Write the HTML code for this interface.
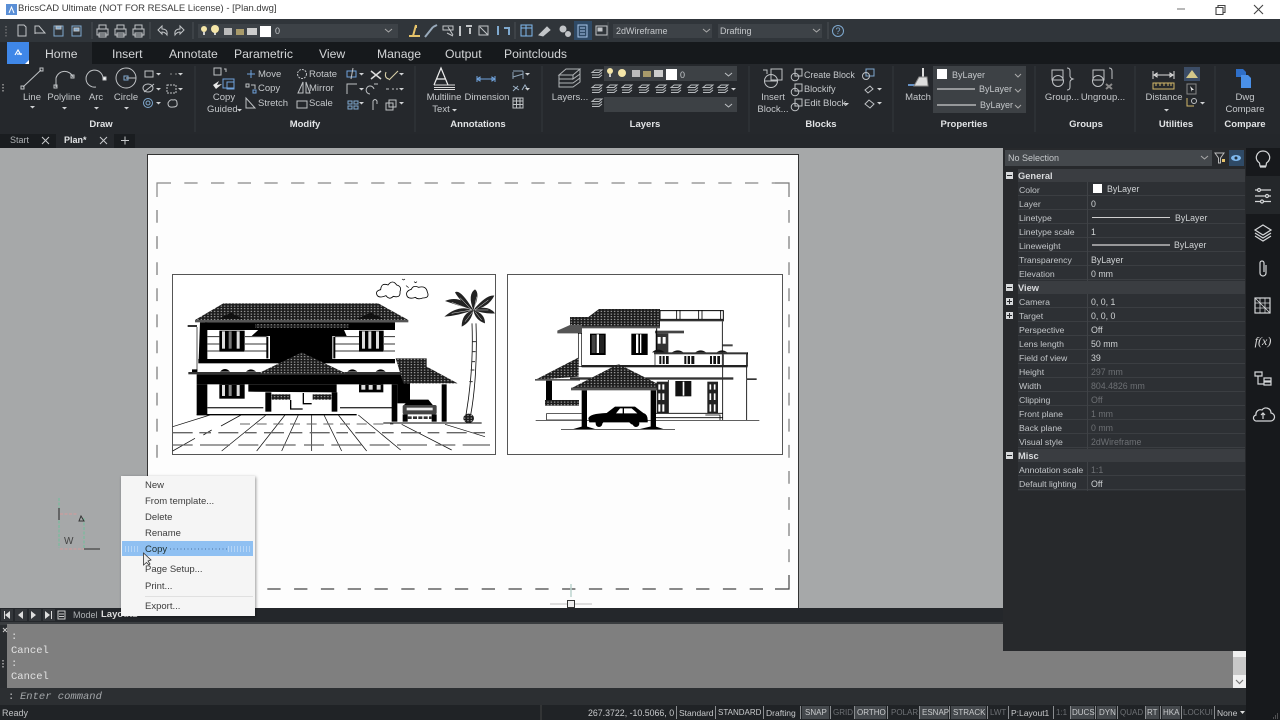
<!DOCTYPE html>
<html><head><meta charset="utf-8"><title>BricsCAD</title>
<style>
html,body{margin:0;padding:0;width:1280px;height:720px;overflow:hidden;background:#a6a8a9;font-family:"Liberation Sans",sans-serif}
.b{position:absolute}
.t,.c{position:absolute;white-space:nowrap;line-height:14px;font-size:9.5px;color:#c5c8cb}
.c{transform:translateX(-50%)}
.g{font-weight:bold;color:#e2e4e6;font-size:9.5px}
.tab{font-size:12.2px;color:#d4d6d8;top:47px}
.p{font-size:8.7px;color:#c3c6c9;left:1019px}
.v{font-size:8.8px;color:#cfd2d4;left:1091px}
.h{font-size:9.3px;font-weight:bold;color:#d8dadc;left:1018px}
.s{font-size:8.8px;top:706px;color:#c8cacc}
.u{font-size:8px}
.d{color:#6d7074}
.m{font-size:9.5px;color:#3c3c3c;left:145px}
.o{font-family:"Liberation Mono",monospace;font-size:10.5px;color:#e2e2e2;left:11px}
svg{position:absolute;left:0;top:0}
</style></head><body>
<!-- bars -->
<div class="b" style="left:0;top:0;width:1280px;height:20px;background:#fff"></div>
<div class="b" style="left:0;top:19px;width:1280px;height:23px;background:#30353a"></div>
<div class="b" style="left:0;top:42px;width:1280px;height:22px;background:#16191c"></div>
<div class="b" style="left:0;top:64px;width:1280px;height:70px;background:#25282c"></div>
<div class="b" style="left:0;top:134px;width:1280px;height:14px;background:#24272b"></div>
<div class="b" style="left:0;top:134px;width:135px;height:14px;background:#1a1d20"></div>
<div class="b" style="left:56px;top:134px;width:58px;height:14px;background:#25282c"></div>
<div class="b" style="left:0;top:148px;width:1003px;height:460px;background:#a6a8a9"></div>
<div class="b" style="left:0;top:42px;width:92px;height:22px;background:#25282c"></div>
<div class="b" style="left:7px;top:42px;width:22px;height:22px;background:#3f87e8"></div>
<div class="b" style="left:198px;top:24px;width:200px;height:14px;background:#3d4247"></div>
<div class="b" style="left:613px;top:24px;width:99px;height:14px;background:#3d4247"></div>
<div class="b" style="left:718px;top:24px;width:104px;height:14px;background:#3d4247"></div>
<div class="b" style="left:574px;top:21px;width:18px;height:19px;background:#2f4a66"></div>
<div class="b" style="left:604px;top:66px;width:133px;height:15px;background:#3d4145"></div>
<div class="b" style="left:604px;top:97px;width:133px;height:15px;background:#3d4145"></div>
<div class="b" style="left:933px;top:66px;width:93px;height:47px;background:#3d4145"></div>
<div class="b" style="left:1184px;top:67px;width:16px;height:14px;background:#3c4d66"></div>
<!-- page -->
<div class="b" style="left:148px;top:155px;width:650px;height:453px;background:#fdfdfd;outline:1px solid #333"></div>

<svg width="1280" height="720" viewBox="0 0 1280 720">
<defs>
<pattern id="hp" width="10" height="8" patternUnits="userSpaceOnUse"><rect width="10" height="8" fill="#1c1c1c"/><rect x="2" y="2" width="4" height="2.500" fill="#ddd"/></pattern>
<polygon id="dn" points="0,0 5,0 2.5,2.5" fill="#d0d2d4"/>
<g id="lay" fill="none" stroke="#b8bbbe"><path d="M0,3.500 L3,1 H10 L7,3.500z M0,6 H7 L10,3.500 M0,8.500 H7 L10,6"/></g>
<g id="bulb"><circle cx="3" cy="3" r="3" fill="#f5e6a8"/><rect x="2" y="6" width="2" height="3" fill="#ccc"/></g>
</defs>
<!-- page dashed -->
<g fill="none" stroke="#777" stroke-width="1.2">
<path d="M157,197 V183 H171" stroke="#888"/>
<path d="M184.300,183 H775" stroke-dasharray="13.300,13.400" stroke="#888"/>
<path d="M775,183 H789 V197" />
<path d="M789,210 V575" stroke-dasharray="12.800,13.300"/>
<path d="M157,210 V470" stroke-dasharray="12.800,13.300"/>
<path d="M789,575 V589 H775" stroke="#444"/>
<path d="M763,589 H256" stroke-dasharray="13.300,13.500" stroke="#444"/>
</g>
<rect x="172.500" y="274.500" width="323" height="180" fill="#fff" stroke="#555"/>
<rect x="507.500" y="274.500" width="275" height="180" fill="#fff" stroke="#555"/>
<path d="M571,584 V597" stroke="#bcd4cf" stroke-width="1.500"/><path d="M550,604 H592" stroke="#aaa" stroke-width=".8"/><rect x="567.500" y="600.500" width="7" height="7" fill="#eee" stroke="#333"/>

<!-- House 1 -->
<g transform="translate(160,265) scale(.33333)">
<polygon fill="url(#hp)" points="190,115 655,115 745,165 105,165"/>
<rect x="105" y="165" width="640" height="7" fill="#555"/>
<rect x="135" y="172" width="570" height="23" fill="#000"/>
<polygon points="175,162 213,143 250,162" fill="#111"/><polygon points="590,162 632,143 672,162" fill="#111"/>
<polygon points="120,172 142,172 142,285 116,285" fill="#000"/>
<rect x="83" y="180" width="28" height="6" fill="#333"/><path d="M111,186 V320" stroke="#000" stroke-width="2"/>
<path d="M275,213 L300,190 H550 L560,213 H517 V290 H330 V213z" fill="#000"/>
<rect x="285" y="178" width="280" height="10" fill="url(#hp)"/>
<path d="M142,215 H178 M142,237 H178 M142,258 H178 M255,215 H320 M255,237 H320 M255,258 H320 M525,215 H597 M525,237 H597 M525,258 H597 M672,215 H705 M672,237 H705 M672,258 H705" stroke="#333" stroke-width="3"/>
<path d="M322,215 V280 M523,215 V280" stroke="#000" stroke-width="6"/>
<rect x="178" y="197" width="76" height="63" fill="#000"/><rect x="186" y="199" width="9" height="52" fill="#ddd"/><rect x="206" y="199" width="9" height="52" fill="#777"/><rect x="230" y="199" width="9" height="52" fill="#ddd"/>
<rect x="597" y="197" width="74" height="63" fill="#000"/><rect x="606" y="199" width="9" height="52" fill="#ddd"/><rect x="625" y="199" width="9" height="52" fill="#ddd"/><rect x="648" y="199" width="9" height="52" fill="#ddd"/>
<rect x="115" y="282" width="590" height="13" fill="#000"/>
<rect x="85" y="321" width="645" height="7" fill="#333"/>
<path d="M96,321 h16 v-8 h-16z M180,320 q15,-16 30,0z M258,320 q15,-14 30,0z M562,320 q15,-14 30,0z M647,320 q15,-14 30,0z" fill="#000"/>
<rect x="110" y="328" width="630" height="30" fill="#000"/>
<polygon fill="url(#hp)" points="425,262 295,325 558,325"/>
<rect x="110" y="358" width="32" height="92" fill="#000"/>
<polygon points="265,358 530,358 530,382 265,380" fill="#000"/>
<rect x="178" y="358" width="76" height="43" fill="#000"/><rect x="186" y="360" width="9" height="33" fill="#ddd"/><rect x="206" y="360" width="9" height="33" fill="#888"/><rect x="230" y="360" width="9" height="33" fill="#ddd"/>
<rect x="597" y="358" width="73" height="24" fill="#000"/><rect x="604" y="360" width="12" height="14" fill="#ddd"/><rect x="626" y="360" width="12" height="14" fill="#ddd"/><rect x="650" y="360" width="12" height="14" fill="#ddd"/>
<rect x="316" y="382" width="18" height="58" fill="#000"/><rect x="515" y="382" width="17" height="58" fill="#000"/>
<rect x="335" y="388" width="56" height="16" fill="url(#hp)"/><rect x="458" y="388" width="56" height="16" fill="url(#hp)"/>
<path d="M430,384 V416 H455 M392,405 V432 H428" stroke="#000" stroke-width="4" fill="none"/>
<path d="M142,428 H310 M540,428 H700" stroke="#333" stroke-width="4"/>
<polygon fill="url(#hp)" points="707,280 800,280 800,305 893,355 730,355"/>
<rect x="695" y="358" width="17" height="112" fill="#000"/><rect x="712" y="355" width="38" height="60" fill="#000"/><rect x="845" y="358" width="15" height="112" fill="#000"/>
<path d="M748,404 H805 L820,422 H730z" fill="#000"/>
<rect x="728" y="420" width="102" height="28" fill="#444" rx="5"/><rect x="740" y="428" width="78" height="8" fill="#eee"/><rect x="728" y="448" width="15" height="22" fill="#000"/><rect x="815" y="448" width="15" height="22" fill="#000"/>
<path d="M743,458 H815" stroke="#333" stroke-width="8" stroke-dasharray="12,4"/>
<path d="M110,449 H590" stroke="#000" stroke-width="4"/>
<path d="M670,474 H965" stroke="#000" stroke-width="3"/>
<path d="M150,450 L38,485 M243,450 L183,483 M318,450 L185,558 M375,450 L290,558 M415,450 L365,558 M455,450 V558 M492,450 L545,558 M535,450 L620,558 M595,450 L722,555 M725,478 L875,555 M855,478 L975,515 M105,520 L38,558 M155,495 L130,510" stroke="#111" stroke-width="2.200" fill="none"/>
<path d="M38,503 H990" stroke="#666" stroke-width="4" stroke-dasharray="60,20,35,22"/>
<path d="M38,540 H990" stroke="#666" stroke-width="4" stroke-dasharray="60,22,90,25"/>
<path d="M240,477 H700" stroke="#666" stroke-width="3" stroke-dasharray="30,20"/>
<!-- clouds -->
<path d="M652,92 q-8,-14 10,-18 q2,-22 22,-14 q14,-18 26,0 q16,4 10,20 q2,20 -20,14 q-12,12 -22,-2 q-18,8 -26,0z M742,95 q-8,-16 12,-22 q6,-14 22,-6 q22,-6 26,14 q8,18 -14,18 q-14,6 -22,-2 q-16,6 -24,-2z" fill="#fff" stroke="#000" stroke-width="2.500"/>
<path d="M726,42 l5,3 l4,-3 M762,50 l5,3 l4,-3 M738,62 l8,6" stroke="#000" stroke-width="2" fill="none"/>
<!-- palm -->
<path d="M936,175 C940,280 930,380 918,450 M948,175 C952,280 945,380 932,450" stroke="#111" stroke-width="2.500" fill="none"/>
<path d="M937,230 h11 M936,260 h11 M934,290 h11 M932,315 h11 M928,350 h10" stroke="#333" stroke-width="3"/>
<ellipse cx="926" cy="460" rx="16" ry="14" fill="url(#hp)"/>
<g fill="#222"><path d="M940,135 Q900,88 855,108 Q895,122 940,135z"/><path d="M940,135 Q962,85 945,73 Q922,88 940,135z"/><path d="M940,135 Q980,88 1003,92 Q985,128 940,135z"/><path d="M940,135 Q985,118 1005,145 Q975,148 940,135z"/><path d="M940,135 Q895,118 853,155 Q895,152 940,135z"/><path d="M940,135 Q975,145 975,175 Q945,165 940,135z"/><path d="M940,135 Q905,145 905,185 Q935,170 940,135z"/><path d="M940,135 Q900,70 885,82 Q900,110 940,135z"/></g>
<path d="M875,112 L935,135 M900,98 L935,135 M950,95 L942,135 M985,105 L945,135 M985,135 L945,135 M875,145 L935,135 M915,170 L938,140 M965,165 L945,140" stroke="#fff" stroke-width="1.300"/>
</g>

<!-- House 2 -->
<g transform="translate(500,265) scale(.33333)">
<path d="M480,163 H670 V137 H480z" fill="#fff" stroke="#000" stroke-width="3"/><path d="M530,135 V163 M540,135 V163 M596,135 V163 M606,135 V163 M662,135 V163" stroke="#000" stroke-width="2.500"/>
<rect x="480" y="163" width="192" height="6" fill="#333"/>
<path d="M667,169 V300 M740,265 V465 M668,300 V465" stroke="#000" stroke-width="2.500" fill="none"/>
<polygon fill="url(#hp)" points="297,132 480,132 480,185 210,185 210,156 265,156"/>
<polygon fill="#555" points="210,180 172,197 172,205 246,205 246,180"/>
<rect x="235" y="205" width="10" height="100" fill="#fff" stroke="#000" stroke-width="2"/>
<rect x="210" y="184" width="270" height="6" fill="#555"/>
<rect x="270" y="206" width="47" height="64" fill="#000"/><rect x="275" y="210" width="12" height="54" fill="#444"/><rect x="290" y="208" width="7" height="56" fill="#fff"/><rect x="298" y="210" width="14" height="54" fill="#222"/>
<rect x="394" y="206" width="49" height="64" fill="#000"/><rect x="408" y="208" width="7" height="56" fill="#fff"/><rect x="420" y="208" width="4" height="56" fill="#fff"/>
<rect x="465" y="197" width="87" height="8" fill="#444"/><rect x="467" y="205" width="38" height="60" fill="#333"/><rect x="473" y="216" width="9" height="20" fill="#fff"/><rect x="488" y="216" width="9" height="20" fill="#fff"/><path d="M470,190 V262" stroke="#000" stroke-width="3"/>
<rect x="668" y="238" width="30" height="6" fill="#444"/>
<rect x="462" y="262" width="282" height="6" fill="#333"/><path d="M465,268 V302 M670,268 V302 M743,262 V302" stroke="#000" stroke-width="2"/>
<path d="M456,262 q18,-16 38,0z M516,262 q18,-12 34,0z M586,262 q16,-12 32,0z M650,262 q16,-12 32,0z" fill="#111"/>
<path d="M478,273 h28 v24 h-28z M553,273 h30 v24 h-30z M630,273 h30 v24 h-30z" fill="#111"/><path d="M486,273 v24 M496,273 v24 M561,273 v24 M572,273 v24 M638,273 v24 M650,273 v24" stroke="#fff" stroke-width="4"/>
<rect x="245" y="300" width="498" height="7" fill="#222"/>
<polygon fill="url(#hp)" points="236,277 236,335 105,345"/>
<rect x="105" y="342" width="135" height="5" fill="#555"/>
<rect x="138" y="347" width="18" height="70" fill="#000"/>
<rect x="135" y="405" width="102" height="17" fill="url(#hp)"/>
<path d="M140,445 H245 M140,465 H245 M140,445 V465" stroke="#000" stroke-width="2"/>
<rect x="210" y="337" width="490" height="7" fill="#333"/><rect x="740" y="340" width="30" height="5" fill="#333"/>
<polygon fill="url(#hp)" points="355,297 213,370 500,370"/>
<rect x="213" y="368" width="287" height="8" fill="#555"/>
<rect x="245" y="376" width="16" height="112" fill="#000"/><rect x="452" y="376" width="16" height="112" fill="#000"/>
<rect x="470" y="350" width="35" height="95" fill="#222"/><path d="M478,385 v20 M490,385 v20 M478,418 v22 M490,418 v22 M478,358 v16 M490,358 v16" stroke="#fff" stroke-width="6"/>
<rect x="526" y="348" width="48" height="46" fill="#111"/><rect x="548" y="350" width="5" height="42" fill="#fff"/>
<rect x="622" y="350" width="32" height="95" fill="#222"/><path d="M631,358 v16 M644,358 v16 M631,385 v20 M644,385 v20 M631,418 v22 M644,418 v22" stroke="#fff" stroke-width="5"/>
<path d="M466,445 H668 M466,458 H668 M616,450 H660 V465 M505,345 V445" stroke="#000" stroke-width="2.500" fill="none"/>
<path d="M107,466 H778" stroke="#000" stroke-width="2"/>
<path d="M183,493 H525" stroke="#000" stroke-width="2"/>
<polygon points="220,492 285,492 262,485 245,485" fill="#000"/><polygon points="420,492 490,492 468,485 450,485" fill="#000"/>
<path d="M265,460 Q268,446 320,444 L345,425 H405 L430,444 Q445,448 443,472 H410 q-10,14 -22,0 H310 q-10,14 -24,0 H268z" fill="#000"/>
<path d="M348,445 L360,430 H368 V445z M372,430 H395 L412,445 H372z" fill="#fff"/>
<circle cx="297" cy="476" r="10" fill="#000"/><circle cx="408" cy="476" r="10" fill="#000"/>
</g>

<!-- toolbar icons -->
<g fill="none" stroke="#c2c5c8" stroke-width="1">
<path d="M6,26 V37" stroke-dasharray="1.500,1.500" stroke="#888"/>
<path d="M18,25 H24 L26,27 V36 H18z"/><path d="M35,26 H39 L45,33 H35z M35,26 V34"/>
<rect x="54" y="26" width="9" height="10" stroke="#7fa9cf"/><rect x="56" y="26" width="5" height="3" fill="#7fa9cf"/><rect x="72" y="26" width="9" height="10" stroke="#7fa9cf"/><rect x="74" y="28" width="5" height="3" fill="#7fa9cf"/>
<g id="pr"><rect x="97" y="29" width="11" height="6"/><rect x="99" y="25" width="7" height="4"/><rect x="99" y="33" width="7" height="4"/></g>
<use href="#pr" x="18"/><use href="#pr" x="36"/>
<path d="M92,22 V39 M150,22 V39 M193,22 V39" stroke="#4a4f54"/>
<path d="M158,30 L162,26 V29 Q168,29 167,35 Q165,32 162,32 V34z"/><path d="M184,30 L180,26 V29 Q174,29 175,35 Q177,32 180,32 V34z"/>
<path d="M385,29 l3.500,3 l3.500,-3" stroke="#aaa"/>
<path d="M409,36 H420 M413,36 L416,25 M416,25 V28" stroke="#e6c36a" stroke-width="2"/>
<path d="M425,37 L433,27 M433,27 L437,25" stroke="#9ab" stroke-width="2"/>
<path d="M443,26 h10 v4 h-10z M447,33 l6,3 M448,27 l5,8" /><path d="M460,26 v10 M466,26 h6 M470,28 v6" stroke-width="2"/><path d="M479,26 h9 v9 h-9z M480,27 l8,8"/><path d="M498,26 v9 M504,28 h5 v7" stroke="#7fa9cf" stroke-width="2"/>
<rect x="521" y="25" width="11" height="11" stroke="#7fb9ef"/><path d="M526,25 V36 M521,28 H532" stroke="#7fb9ef"/>
<path d="M539,35 L547,27 L550,30 L543,36z" fill="#c2c5c8"/>
<circle cx="563" cy="29" r="3" fill="#c2c5c8"/><circle cx="568" cy="34" r="2.500" fill="#c2c5c8"/>
<rect x="578" y="25" width="9" height="12" stroke="#a9c7ea"/><path d="M580,28 h5 M580,31 h5 M580,34 h5" stroke="#a9c7ea"/>
<rect x="596" y="26" width="11" height="9"/><rect x="598" y="28" width="4" height="3" fill="#c2c5c8"/>
<path d="M703,29 l3.500,3 l3.500,-3 M813,29 l3.500,3 l3.500,-3" stroke="#aaa"/>
<circle cx="838" cy="31" r="5.500" stroke="#7fa9cf"/>
<path d="M608,22 V39 M828,22 V39 M515,22 V39" stroke="#4a4f54"/>
</g>
<use href="#bulb" x="201" y="26"/><use href="#bulb" x="212" y="26"/><circle cx="215" cy="29" r="4" fill="#f5e6a8"/>
<rect x="224" y="28" width="8" height="7" fill="#bbb"/><rect x="236" y="29" width="8" height="6" fill="#a89a6a"/><rect x="247" y="28" width="10" height="7" fill="#ccc"/>
<rect x="260" y="26" width="11" height="11" fill="#fff"/>
<!-- App logo -->
<path d="M15,55 L18,50 L21,55 M17,54 H22" stroke="#fff" fill="none" stroke-width="1.200"/><polygon points="29,64 25,64 29,60" fill="#fff"/>
<rect x="6" y="4" width="11" height="11" fill="#5a8fd6"/><path d="M9,13 L11.500,7 L14,13" stroke="#fff" fill="none"/>
<!-- window -->
<path d="M1177,9 H1185" stroke="#888" stroke-width="1.200"/><path d="M1216,7.500 h7 v7 h-7z M1218,7.500 v-2 h7 v7 h-2" fill="none" stroke="#444" stroke-width="1.100"/><path d="M1254,5 L1263,14 M1263,5 L1254,14" stroke="#444" stroke-width="1.100"/>

<!-- ribbon icons -->
<g fill="none" stroke="#bfc2c5" stroke-width="1">
<path d="M3,84 V92" stroke-dasharray="1.500,1.500" stroke="#999" stroke-width="1.500"/>
<path d="M23,87 L41,70"/><rect x="21" y="86" width="3" height="3"/><rect x="40" y="68" width="3" height="3"/>
<path d="M56,87 V78 A9,9 0 0 1 73,77"/><rect x="54" y="85" width="3" height="3"/><rect x="71" y="75" width="3" height="3"/>
<path d="M103,78 A8.500,8.500 0 1 0 96,87"/><rect x="103" y="77" width="3" height="3" fill="#fff"/>
<circle cx="126" cy="78" r="10"/><path d="M126,78 H136"/><rect x="124" y="76" width="4" height="4" stroke="#7fa9cf"/>
<rect x="145" y="71" width="8" height="6"/><ellipse cx="148" cy="88" rx="5" ry="4"/><path d="M144,92 L154,84"/><circle cx="148" cy="103" r="4.500" stroke="#7fa9cf"/><circle cx="148" cy="103" r="2" stroke="#7fa9cf"/>
<path d="M167,85 h9 v8 h-9z" stroke-dasharray="2,1"/><path d="M168,103 q2,-4 5,-3 q4,-1 4,3 q1,4 -4,4 q-5,1 -5,-4z"/>
<path d="M170,74 h2 M175,74 h2" stroke="#888"/>
<rect x="214" y="68" width="7" height="7"/><path d="M224,69 h2 v3"/><rect x="223" y="79" width="11" height="9" stroke="#6fa2dc"/><rect x="227" y="82" width="7" height="7" stroke="#6fa2dc"/><path d="M213,85 l6,-4 l-2,4 l5,-1 l-6,5z" fill="#e8e8e8" stroke="none"/>
<path d="M247,74 h8 M251,70 v8" stroke="#6fa2dc"/><rect x="246" y="84" width="3" height="3"/><rect x="253" y="90" width="3" height="3" stroke="#6fa2dc"/><path d="M251,85 h4 v4"/>
<path d="M246,108 V98 L255,108z"/>
<circle cx="302" cy="74" r="4.500" stroke-dasharray="2,1"/><path d="M303,82 L298,93 H303z M306,82 V93 L310,93z" /><rect x="297" y="101" width="10" height="7"/>
<rect x="347" y="71" width="9" height="6" stroke="#6fa2dc"/><path d="M353,68 L351,79"/><path d="M371,71 L381,79 M381,71 L371,79" stroke="#ddd" stroke-width="1.500"/><path d="M386,72 q-2,6 3,7 M389,80 L398,71" stroke="#d8d0a8" stroke-width="1.100"/>
<path d="M347,94 V84 H357" /><path d="M370,94 a4,4 0 1 1 4,-5 M374,84 h4"/><path d="M386,89 h3 M392,89 h2 M396,89 h2"/>
<rect x="348" y="101" width="4" height="3" stroke="#7fa9cf"/><rect x="354" y="101" width="4" height="3" stroke="#7fa9cf"/><rect x="348" y="106" width="4" height="3" stroke="#7fa9cf"/><rect x="354" y="106" width="4" height="3" stroke="#7fa9cf"/>
<path d="M373,110 V101 q2,-3 4,0 v3"/><rect x="386" y="103" width="7" height="7"/><rect x="389" y="100" width="7" height="7"/>
<path d="M434,85 L441,68 L448,85 M437,79 H445" stroke="#eee" stroke-width="1.200"/><path d="M434,85 H455 M434,87.500 H455 M434,89.500 H455" stroke="#ddd"/>
<path d="M477,79 H495" stroke="#6fa2dc"/><path d="M477,76 V82 M495,76 V82 M477,79 l3,-2 v4z M495,79 l-3,-2 v4z" stroke="#6fa2dc"/>
<path d="M513,71 H523 M513,79 V72 M523,79 V71 M513,77 L523,74" stroke="#8fa4b8"/><path d="M513,86 l6,4 M513,91 l5,-5 M522,90 l3,-5 l3,5" stroke="#9fb4c8"/>
<rect x="513" y="98" width="10" height="10"/><path d="M513,101 H523 M513,104.500 H523 M516.500,98 V108 M520,98 V108"/>
<path d="M559,75 L566,69 H580 L573,75z M559,75 V79 M573,75 V79 L580,74 V69 M559,79 H573 M559,79 V83 L573,83 L580,78 V74 M559,83 V87 H573 L580,82 V78" stroke="#b0b3b6"/>
<use href="#lay" x="592" y="69"/><use href="#lay" x="592" y="84"/><use href="#lay" x="592" y="98"/>
<use href="#lay" x="607" y="84"/><use href="#lay" x="622" y="84"/><use href="#lay" x="639" y="84"/><use href="#lay" x="656" y="84"/><use href="#lay" x="671" y="84"/><use href="#lay" x="688" y="84"/><use href="#lay" x="703" y="84"/><use href="#lay" x="718" y="84"/>
<path d="M725,73 l3.500,3 l3.500,-3 M725,104 l3.500,3 l3.500,-3"/>
<rect x="771" y="69" width="11" height="11"/><circle cx="771" cy="81" r="6.500"/><path d="M763,70 h4 v4 M764,81 H777"/>
<rect x="795" y="69" width="7" height="7"/><circle cx="795" cy="77" r="3.800"/><rect x="795" y="84" width="7" height="7"/><circle cx="795" cy="92" r="3.800"/><rect x="795" y="99" width="7" height="7"/><circle cx="795" cy="107" r="3.800"/>
<rect x="866" y="69" width="8" height="7" stroke="#7fa9cf"/><circle cx="866" cy="76" r="3.500"/><path d="M865,90 l5,-4 l3,3 l-5,4z" /><path d="M865,104 l4,-4 l5,4 l-4,4z"/>
<path d="M908,85 H926" stroke="#6fa2dc" stroke-width="1.800"/>
<path d="M923,68 V77" stroke="#ddd" stroke-width="2"/><path d="M914,86 L919,77 H927 L928,86z" fill="#ddd" stroke="#888"/>
<rect x="1052" y="70" width="11" height="10"/><circle cx="1058" cy="81" r="5.500"/><path d="M1067,68 q3,0 3,3 v5 q0,2 3,3 q-3,1 -3,3 v5 q0,3 -3,3"/>
<rect x="1093" y="70" width="11" height="10"/><circle cx="1098" cy="81" r="5.500"/><path d="M1109,68 q3,0 3,3 v8"/><path d="M1106,84 l6,5 M1112,84 l-6,5" stroke="#888" stroke-width="2"/>
<path d="M1153,75 H1174 M1153,71 V79 M1174,71 V79 M1154,75 l3,-2 v4z M1173,75 l-3,-2 v4z" stroke="#ddd"/>
<rect x="1153" y="83" width="21" height="6" stroke="#d4b86a"/><path d="M1156,83 v3 M1160,83 v3 M1164,83 v3 M1168,83 v3 M1171,83 v3" stroke="#d4b86a"/>
<path d="M1186,78 L1192,70 L1198,78z" fill="#d4c88a" stroke="none"/><rect x="1187" y="84" width="9" height="10" stroke="#888"/><path d="M1190,86 l4,4 h-2 v2z" fill="#eee" stroke="none"/>
<circle cx="1194" cy="101" r="2.500"/><path d="M1187,98 v8 h7" stroke="#d4b86a"/>
</g>
<g>
<path d="M1236,69 h7 l3,3 v5 h-10z" fill="#2f6fc8"/><path d="M1241,75 h7 l3,3 v10 h-10z" fill="#4a90e8"/>
</g>
<g><use href="#dn" x="30" y="106"/><use href="#dn" x="62" y="107"/><use href="#dn" x="94" y="107"/><use href="#dn" x="124" y="107"/>
<use href="#dn" x="156" y="73"/><use href="#dn" x="156" y="88"/><use href="#dn" x="156" y="102"/><use href="#dn" x="178" y="73"/><use href="#dn" x="178" y="88"/>
<use href="#dn" x="237" y="109"/><use href="#dn" x="359" y="73"/><use href="#dn" x="359" y="88"/><use href="#dn" x="359" y="102"/><use href="#dn" x="399" y="73"/><use href="#dn" x="399" y="88"/><use href="#dn" x="399" y="102"/>
<use href="#dn" x="525" y="73"/><use href="#dn" x="525" y="88"/><use href="#dn" x="452" y="109"/><use href="#dn" x="844" y="103"/><use href="#dn" x="877" y="88"/><use href="#dn" x="877" y="102"/><use href="#dn" x="1164" y="109"/><use href="#dn" x="1200" y="102"/>
<use href="#dn" x="731" y="88"/></g>
<!-- layer ribbon row 1 -->
<use href="#bulb" x="607" y="68"/><circle cx="622" cy="73" r="4" fill="#f5e6a8"/><rect x="632" y="70" width="8" height="7" fill="#bbb"/><rect x="643" y="71" width="8" height="6" fill="#a89a6a"/><rect x="654" y="70" width="9" height="7" fill="#ccc"/><rect x="666" y="69" width="11" height="11" fill="#fff"/>
<!-- properties swatch -->
<rect x="937" y="69" width="10" height="10" fill="#fff"/>
<path d="M937,89 H975 M937,105 H976" stroke="#eee"/>
<g fill="none" stroke="#aaa"><path d="M1015,74 l3,3 l3,-3 M1015,89 l3,3 l3,-3 M1015,105 l3,3 l3,-3"/></g>
<!-- ribbon separators -->
<path d="M195,66 V132 M415,66 V132 M542,66 V132 M749,66 V132 M893,66 V132 M1035,66 V132 M1135,66 V132 M1215,66 V132" stroke="#34383c"/>
<!-- tab close -->
<g stroke="#c8cacc" fill="none"><path d="M42,137 l7,7 M49,137 l-7,7 M100,137 l7,7 M107,137 l-7,7 M121,140.500 h8 M125,136.500 v8"/></g>
</svg>

<!-- text title -->
<div class="t" style="left:18px;top:2px;font-size:9.500px;color:#3a3a3a">BricsCAD Ultimate (NOT FOR RESALE License) - [Plan.dwg]</div>
<div class="t" style="left:275px;top:24px;font-size:9px">0</div>
<div class="t" style="left:616px;top:24px;font-size:9px">2dWireframe</div>
<div class="t" style="left:720px;top:24px;font-size:9px">Drafting</div>
<div class="c" style="left:838px;top:24px;font-size:9px;color:#7fa9cf">?</div>
<!-- tabs -->
<div class="t tab" style="left:45px">Home</div><div class="t tab" style="left:112px">Insert</div><div class="t tab" style="left:169px">Annotate</div><div class="t tab" style="left:234px">Parametric</div><div class="t tab" style="left:319px">View</div><div class="t tab" style="left:377px">Manage</div><div class="t tab" style="left:445px">Output</div><div class="t tab" style="left:504px">Pointclouds</div>
<!-- ribbon labels -->
<div class="c" style="left:32px;top:91px">Line</div><div class="c" style="left:64px;top:91px">Polyline</div><div class="c" style="left:96px;top:91px">Arc</div><div class="c" style="left:126px;top:91px">Circle</div>
<div class="c" style="left:224px;top:91px">Copy</div><div class="t" style="left:207px;top:103px">Guided</div>
<div class="t" style="left:258px;top:68px">Move</div><div class="t" style="left:258px;top:82px">Copy</div><div class="t" style="left:258px;top:97px">Stretch</div>
<div class="t" style="left:309px;top:68px">Rotate</div><div class="t" style="left:309px;top:82px">Mirror</div><div class="t" style="left:309px;top:97px">Scale</div>
<div class="c" style="left:444px;top:91px">Multiline</div><div class="c" style="left:441px;top:103px">Text</div><div class="c" style="left:487px;top:91px">Dimension</div>
<div class="c" style="left:570px;top:91px">Layers...</div><div class="t" style="left:680px;top:68px;font-size:9px">0</div>
<div class="c" style="left:773px;top:91px">Insert</div><div class="c" style="left:773px;top:103px">Block...</div>
<div class="t" style="left:804px;top:68px;font-size:8.900px">Create Block</div><div class="t" style="left:804px;top:82px;font-size:9.200px">Blockify</div><div class="t" style="left:804px;top:97px">Edit Block</div>
<div class="c" style="left:918px;top:91px">Match</div><div class="t" style="left:952px;top:68px;font-size:9px">ByLayer</div><div class="t" style="left:979px;top:82px;font-size:9px">ByLayer</div><div class="t" style="left:980px;top:98px;font-size:9px">ByLayer</div>
<div class="c" style="left:1062px;top:91px">Group...</div><div class="c" style="left:1103px;top:91px">Ungroup...</div><div class="c" style="left:1164px;top:91px">Distance</div>
<div class="c" style="left:1245px;top:91px">Dwg</div><div class="c" style="left:1245px;top:103px">Compare</div>
<div class="c g" style="left:101px;top:118px">Draw</div><div class="c g" style="left:305px;top:118px">Modify</div><div class="c g" style="left:478px;top:118px">Annotations</div><div class="c g" style="left:645px;top:118px">Layers</div><div class="c g" style="left:821px;top:118px">Blocks</div><div class="c g" style="left:964px;top:118px">Properties</div><div class="c g" style="left:1086px;top:118px">Groups</div><div class="c g" style="left:1176px;top:118px">Utilities</div><div class="c g" style="left:1245px;top:118px">Compare</div>
<div class="t" style="left:10px;top:133px;font-size:9px;color:#aeb1b4">Start</div><div class="t" style="left:64px;top:133px;font-size:9px;font-weight:bold;color:#e2e4e6">Plan*</div>

<!-- bottom -->
<div class="b" style="left:0;top:608px;width:1003px;height:14px;background:#24272b"></div>
<div class="b" style="left:0;top:622px;width:1246px;height:3px;background:#3a3d40"></div>
<div class="b" style="left:0;top:625px;width:7px;height:63px;background:#2a2d30"></div>
<div class="b" style="left:7px;top:624px;width:1239px;height:64px;background:#7f7f7f"></div>
<div class="b" style="left:0;top:688px;width:1246px;height:17px;background:#2c2f32"></div>
<div class="b" style="left:0;top:705px;width:1246px;height:15px;background:#202326"></div>
<div class="b" style="left:1233px;top:651px;width:13px;height:37px;background:#f0f0f0"></div>
<div class="b" style="left:1233px;top:657px;width:13px;height:18px;background:#c8c8c8"></div>
<!-- properties panel -->
<div class="b" style="left:1003px;top:148px;width:243px;height:503px;background:#27292c"></div>
<div class="b" style="left:1246px;top:148px;width:34px;height:572px;background:#17191c"></div>
<div class="b" style="left:1246px;top:176px;width:34px;height:38px;background:#24272a"></div>
<div class="b" style="left:1005px;top:150px;width:207px;height:16px;background:#44484c"></div>
<div class="b" style="left:1229px;top:150px;width:15px;height:16px;background:#2f4a66"></div>
<div class="b" style="left:1018px;top:169px;width:227px;height:13px;background:#3a3d41"></div>
<div class="b" style="left:1018px;top:281px;width:227px;height:13px;background:#3a3d41"></div>
<div class="b" style="left:1018px;top:449px;width:227px;height:13px;background:#3a3d41"></div>
<div class="b" style="left:1018px;top:182px;width:227px;height:99px;background:repeating-linear-gradient(#2d3034 0,#2d3034 13px,#3b3e42 13px,#3b3e42 14px)"></div>
<div class="b" style="left:1018px;top:294px;width:227px;height:155px;background:repeating-linear-gradient(#2d3034 0,#2d3034 13px,#3b3e42 13px,#3b3e42 14px)"></div>
<div class="b" style="left:1018px;top:462px;width:227px;height:29px;background:repeating-linear-gradient(#2d3034 0,#2d3034 13px,#3b3e42 13px,#3b3e42 14px)"></div>
<div class="b" style="left:1087px;top:182px;width:1px;height:99px;background:#3f4246"></div>
<div class="b" style="left:1087px;top:294px;width:1px;height:155px;background:#3f4246"></div>
<div class="b" style="left:1087px;top:462px;width:1px;height:29px;background:#3f4246"></div>

<svg width="1280" height="720" viewBox="0 0 1280 720">
<g fill="#d8dadc"><rect x="1006" y="172" width="7" height="7"/><rect x="1006" y="284" width="7" height="7"/><rect x="1006" y="452" width="7" height="7"/><rect x="1006" y="298" width="7" height="7"/><rect x="1006" y="312" width="7" height="7"/></g>
<path d="M1007,175.500 H1012 M1007,287.500 H1012 M1007,455.500 H1012 M1007,301.500 H1012 M1009.500,299 V304 M1007,315.500 H1012 M1009.500,313 V318" stroke="#27292c"/>
<rect x="1093" y="184" width="9" height="9" fill="#fff"/>
<path d="M1092,217.500 H1170" stroke="#cfcfcf"/><path d="M1092,245 H1170" stroke="#bbb" stroke-width="1.500"/>
<path d="M1201,156 l3.500,3 l3.500,-3" stroke="#aaa" fill="none"/>
<path d="M1215,153 h9 l-3.500,5 v5 h-2 v-5z" fill="none" stroke="#bbb"/><rect x="1222" y="159" width="3" height="3" fill="#e6c36a"/>
<ellipse cx="1236" cy="158" rx="5" ry="3" fill="#7fb9ef"/><circle cx="1236" cy="158" r="1.500" fill="#234"/>
<g fill="none" stroke="#d4d6d8" stroke-width="1.200">
<path d="M1260,167 h6 M1259.500,163 q-4,-3 -3,-7 q1.500,-5 6.500,-5 q5,0 6.500,5 q1,4 -3,7 l-.5,3 h-6z"/>
<path d="M1255,190 H1271 M1255,196 H1271 M1255,201.500 H1271"/><circle cx="1259" cy="190" r="1.500" fill="#24272a"/><circle cx="1267" cy="196" r="1.500" fill="#24272a"/><circle cx="1262" cy="201.500" r="1.500" fill="#24272a"/>
<path d="M1263,225 L1271,230 L1263,235 L1255,230z M1255,233 L1263,238 L1271,233 M1255,236 L1263,241 L1271,236"/>
<path d="M1266,265 V273 a3,3 0 0 1 -6,0 V263 a2,2 0 0 1 4,0 V272"/>
<rect x="1255" y="298" width="15" height="15"/><path d="M1255,298 L1270,313 M1260,298 V313 M1265,298 V313 M1255,303 H1270 M1255,308 H1270" stroke-width=".8"/>
<path d="M1255,372 h7 v4 h-7z M1258,376 V384 H1264 M1264,378 h7 v3 h-7z M1264,382 h7 v3 h-7z"/>
<path d="M1257,421 h13 a4,4 0 0 0 1,-8 a5,5 0 0 0 -9,-3 a4.500,4.500 0 0 0 -6,5 a3,3 0 0 0 1,6z M1263,419 V414 M1261,415 l2,-2 l2,2"/>
</g>
<!-- UCS -->
<path d="M59,498 V548 M84,518 V548" stroke="#6fc09c" stroke-dasharray="3,1.500" fill="none"/>
<path d="M60,514 H78 M60,549 H84" stroke="#d69a9a" stroke-dasharray="3,1.500"/>
<path d="M59,508 V520" stroke="#222"/><path d="M84,549 H100" stroke="#555" stroke-width="1.500"/>
<path d="M79,521 L81,516 L84,521z" fill="none" stroke="#333"/>
<!-- layout nav -->
<g fill="#ddd"><rect x="1" y="609" width="12" height="12" fill="#34373b"/><rect x="15" y="609" width="12" height="12" fill="#34373b"/><rect x="29" y="609" width="12" height="12" fill="#34373b"/><rect x="43" y="609" width="12" height="12" fill="#34373b"/>
<path d="M4,611 h1 v8 h-1z M10,611 V619 L5,615z M23,611 V619 L18,615z M31,611 V619 L36,615z M45,611 V619 L50,615z M51,611 h1 v8 h-1z"/></g>
<rect x="58" y="611" width="7" height="8" fill="none" stroke="#ccc"/><path d="M59,614 h5 M59,616.500 h5" stroke="#ccc"/>
<path d="M3,628 l4,4 M7,628 l-4,4" stroke="#ccc"/>
<path d="M3,660 V668" stroke="#aaa" stroke-dasharray="1.500,1.500" stroke-width="1.500"/>
<path d="M1236,680 l3.500,3.500 l3.500,-3.500" fill="none" stroke="#777" stroke-width="1.200"/>
<path d="M1240,711 h5 l-2.500,3z" fill="#ddd"/>
<path d="M1277,714 h1 M1275,716 h1 M1277,716 h1 M1273,718 h1 M1275,718 h1 M1277,718 h1" stroke="#888"/>
<path d="M541,705 V720" stroke="#444"/>
<path d="M676.500,706 V719 M715.500,706 V719 M763.500,706 V719 M800.500,706 V719 M830.500,706 V719 M854.500,706 V719 M887.500,706 V719 M919.500,706 V719 M949.500,706 V719 M987.500,706 V719 M1008.500,706 V719 M1053.500,706 V719 M1070.500,706 V719 M1095.500,706 V719 M1117.500,706 V719 M1145.500,706 V719 M1160.500,706 V719 M1181.500,706 V719 M1214.500,706 V719" stroke="#8a8d90"/>
</svg>

<!-- properties text -->
<div class="t" style="left:1008px;top:151px;font-size:9px">No Selection</div>
<div class="t h" style="top:169px">General</div><div class="t h" style="top:281px">View</div><div class="t h" style="top:449px">Misc</div>
<div class="t p" style="top:183px">Color</div><div class="t p" style="top:197px">Layer</div><div class="t p" style="top:211px">Linetype</div><div class="t p" style="top:225px">Linetype scale</div><div class="t p" style="top:239px">Lineweight</div><div class="t p" style="top:253px">Transparency</div><div class="t p" style="top:267px">Elevation</div>
<div class="t p" style="top:295px">Camera</div><div class="t p" style="top:309px">Target</div><div class="t p" style="top:323px">Perspective</div><div class="t p" style="top:337px">Lens length</div><div class="t p" style="top:351px">Field of view</div><div class="t p" style="top:365px">Height</div><div class="t p" style="top:379px">Width</div><div class="t p" style="top:393px">Clipping</div><div class="t p" style="top:407px">Front plane</div><div class="t p" style="top:421px">Back plane</div><div class="t p" style="top:435px">Visual style</div>
<div class="t p" style="top:463px">Annotation scale</div><div class="t p" style="top:477px">Default lighting</div>
<div class="t v" style="left:1107px;top:182px">ByLayer</div><div class="t v" style="top:197px">0</div><div class="t v" style="left:1175px;top:211px">ByLayer</div><div class="t v" style="top:225px">1</div><div class="t v" style="left:1174px;top:238px">ByLayer</div><div class="t v" style="top:253px">ByLayer</div><div class="t v" style="top:267px">0 mm</div>
<div class="t v" style="top:295px">0, 0, 1</div><div class="t v" style="top:309px">0, 0, 0</div><div class="t v" style="top:323px">Off</div><div class="t v" style="top:337px">50 mm</div><div class="t v" style="top:351px">39</div><div class="t v d" style="top:365px">297 mm</div><div class="t v d" style="top:379px">804.4826 mm</div><div class="t v d" style="top:393px">Off</div><div class="t v d" style="top:407px">1 mm</div><div class="t v d" style="top:421px">0 mm</div><div class="t v d" style="top:435px">2dWireframe</div><div class="t v d" style="top:463px">1:1</div><div class="t v" style="top:477px">Off</div>
<div class="c" style="left:1263px;top:334px;font-family:'Liberation Serif',serif;font-style:italic;font-size:12px;color:#ddd">f(x)</div>
<!-- UCS / layout -->
<div class="t" style="left:64px;top:535px;font-size:10px;color:#444">W</div>
<div class="t" style="left:73px;top:608px;font-size:9px;color:#aeb1b4">Model</div><div class="t" style="left:101px;top:608px;font-size:9.500px;font-weight:bold;color:#ddd">Layout1</div>
<!-- Context menu -->
<div class="b" style="left:121px;top:476px;width:134px;height:140px;background:#f5f5f5;box-shadow:1px 1px 3px rgba(0,0,0,.4)"></div>
<div class="b" style="left:122px;top:541px;width:131px;height:15px;background:#8fc0f2"></div>
<div class="b" style="left:145px;top:596px;width:108px;height:1px;background:#e0e0e0"></div>
<div class="t m" style="top:479px">New</div><div class="t m" style="top:495px">From template...</div><div class="t m" style="top:511px">Delete</div><div class="t m" style="top:527px">Rename</div><div class="t m" style="top:543px;color:#233">Copy</div><div class="t m" style="top:563px">Page Setup...</div><div class="t m" style="top:580px">Print...</div><div class="t m" style="top:600px">Export...</div>
<svg width="1280" height="720" viewBox="0 0 1280 720"><path d="M170,549 H228" stroke="#4a6fa0" stroke-dasharray="1,2.500"/><path d="M125,549 H140 M228,549 H250" stroke="#cfe4fa" stroke-width="6" stroke-dasharray="1,2" opacity=".6"/>
<path d="M143.500,553 V565 L146.500,562.500 L149,565 L150,564 L148,561 L151,560z" fill="#eee" stroke="#333" stroke-width=".8"/></svg>
<!-- command -->
<div class="t o" style="top:630px">:</div><div class="t o" style="top:644px">Cancel</div><div class="t o" style="top:657px">:</div><div class="t o" style="top:670px">Cancel</div>
<div class="t" style="left:8px;top:690px;font-family:'Liberation Mono',monospace;font-size:10.500px;color:#c0c2c4">:</div><div class="t" style="left:20px;top:690px;font-family:'Liberation Mono',monospace;font-style:italic;font-size:10.500px;color:#a5a8ab">Enter command</div>
<div class="t" style="left:2px;top:706px;font-size:9px;color:#c0c2c4">Ready</div>
<!-- status -->
<div class="b" style="left:802px;top:706px;width:27px;height:13px;background:#44484c"></div><div class="b" style="left:855px;top:706px;width:31px;height:13px;background:#44484c"></div><div class="b" style="left:920px;top:706px;width:28px;height:13px;background:#44484c"></div><div class="b" style="left:951px;top:706px;width:35px;height:13px;background:#44484c"></div><div class="b" style="left:1071px;top:706px;width:23px;height:13px;background:#44484c"></div><div class="b" style="left:1097px;top:706px;width:19px;height:13px;background:#44484c"></div><div class="b" style="left:1146px;top:706px;width:13px;height:13px;background:#44484c"></div><div class="b" style="left:1162px;top:706px;width:18px;height:13px;background:#44484c"></div>
<div class="t s" style="left:588px">267.3722, -10.5066, 0</div><div class="t s" style="left:679px;font-size:8.500px">Standard</div><div class="t s u" style="left:718px">STANDARD</div><div class="t s" style="left:766px;font-size:8.500px">Drafting</div><div class="t s u" style="left:805px">SNAP</div><div class="t s u d" style="left:833px">GRID</div><div class="t s u" style="left:857px">ORTHO</div><div class="t s u d" style="left:891px">POLAR</div><div class="t s u" style="left:922px">ESNAP</div><div class="t s u" style="left:953px">STRACK</div><div class="t s u d" style="left:990px">LWT</div><div class="t s" style="left:1011px;font-size:8.500px">P:Layout1</div><div class="t s u d" style="left:1056px">1:1</div><div class="t s u" style="left:1072px">DUCS</div><div class="t s u" style="left:1099px">DYN</div><div class="t s u d" style="left:1120px">QUAD</div><div class="t s u" style="left:1147px">RT</div><div class="t s u" style="left:1163px">HKA</div><div class="t s u d" style="left:1183px">LOCKUI</div><div class="t s" style="left:1217px;font-size:8.500px">None</div>
</body></html>
